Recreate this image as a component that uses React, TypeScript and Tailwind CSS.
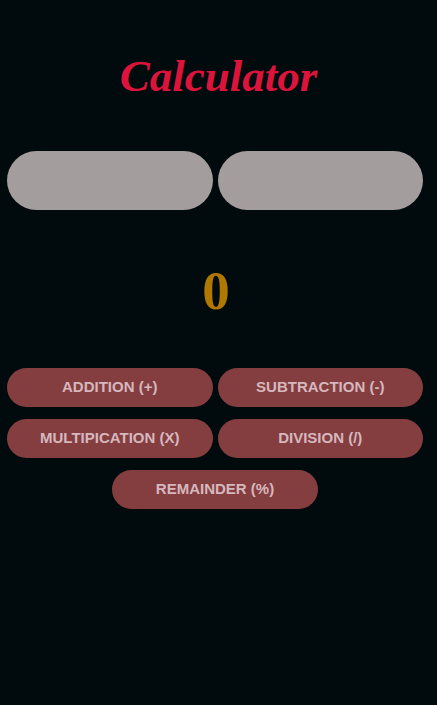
import React, { useState } from 'react';

export default function App() {
  const [a, setA] = useState('');
  const [b, setB] = useState('');
  const [result, setResult] = useState<number | string>(0);

  const ops = [
    { label: 'ADDITION (+)', fn: (x: number, y: number) => x + y },
    { label: 'SUBTRACTION (-)', fn: (x: number, y: number) => x - y },
    { label: 'MULTIPICATION (X)', fn: (x: number, y: number) => x * y },
    { label: 'DIVISION (/)', fn: (x: number, y: number) => x / y },
  ];

  const run = (fn: (x: number, y: number) => number) => setResult(fn(Number(a), Number(b)));

  const btn =
    'h-[39px] rounded-full bg-[#843e40] text-[15px] font-bold text-[#d6b7bd] [font-family:"Liberation_Sans",Arial,sans-serif]';

  return (
    <div className="min-h-[705px] bg-[#010b0d]">
      {/* 标题 */}
      <h1 className="pt-[50px] text-center text-[45px] font-bold italic leading-[52px] text-[#dc143c] [font-family:'Liberation_Serif','Times_New_Roman',serif]">
        Calculator
      </h1>

      {/* 输入框 */}
      <div className="mt-[49px] grid grid-cols-2 gap-[5px] pl-[7px] pr-[14px]">
        <input
          value={a}
          onChange={e => setA(e.target.value)}
          className="h-[59px] rounded-full bg-[#a39e9d] px-6 text-xl outline-none"
        />
        <input
          value={b}
          onChange={e => setB(e.target.value)}
          className="h-[59px] rounded-full bg-[#a39e9d] px-6 text-xl outline-none"
        />
      </div>

      {/* 结果 */}
      <div className="mt-[46px] pr-[5px] text-center text-[55px] font-bold leading-[70px] text-[#b07800] [font-family:'Liberation_Serif','Times_New_Roman',serif]">
        {result}
      </div>

      {/* 操作按钮 */}
      <div className="mt-[42px] grid grid-cols-2 gap-x-[5px] gap-y-[12px] pl-[7px] pr-[14px]">
        {ops.map(op => (
          <button key={op.label} className={btn} onClick={() => run(op.fn)}>
            {op.label}
          </button>
        ))}
        <button
          className={`${btn} col-span-2 mx-auto w-[206px]`}
          onClick={() => run((x, y) => x % y)}
        >
          REMAINDER (%)
        </button>
      </div>
    </div>
  );
}
